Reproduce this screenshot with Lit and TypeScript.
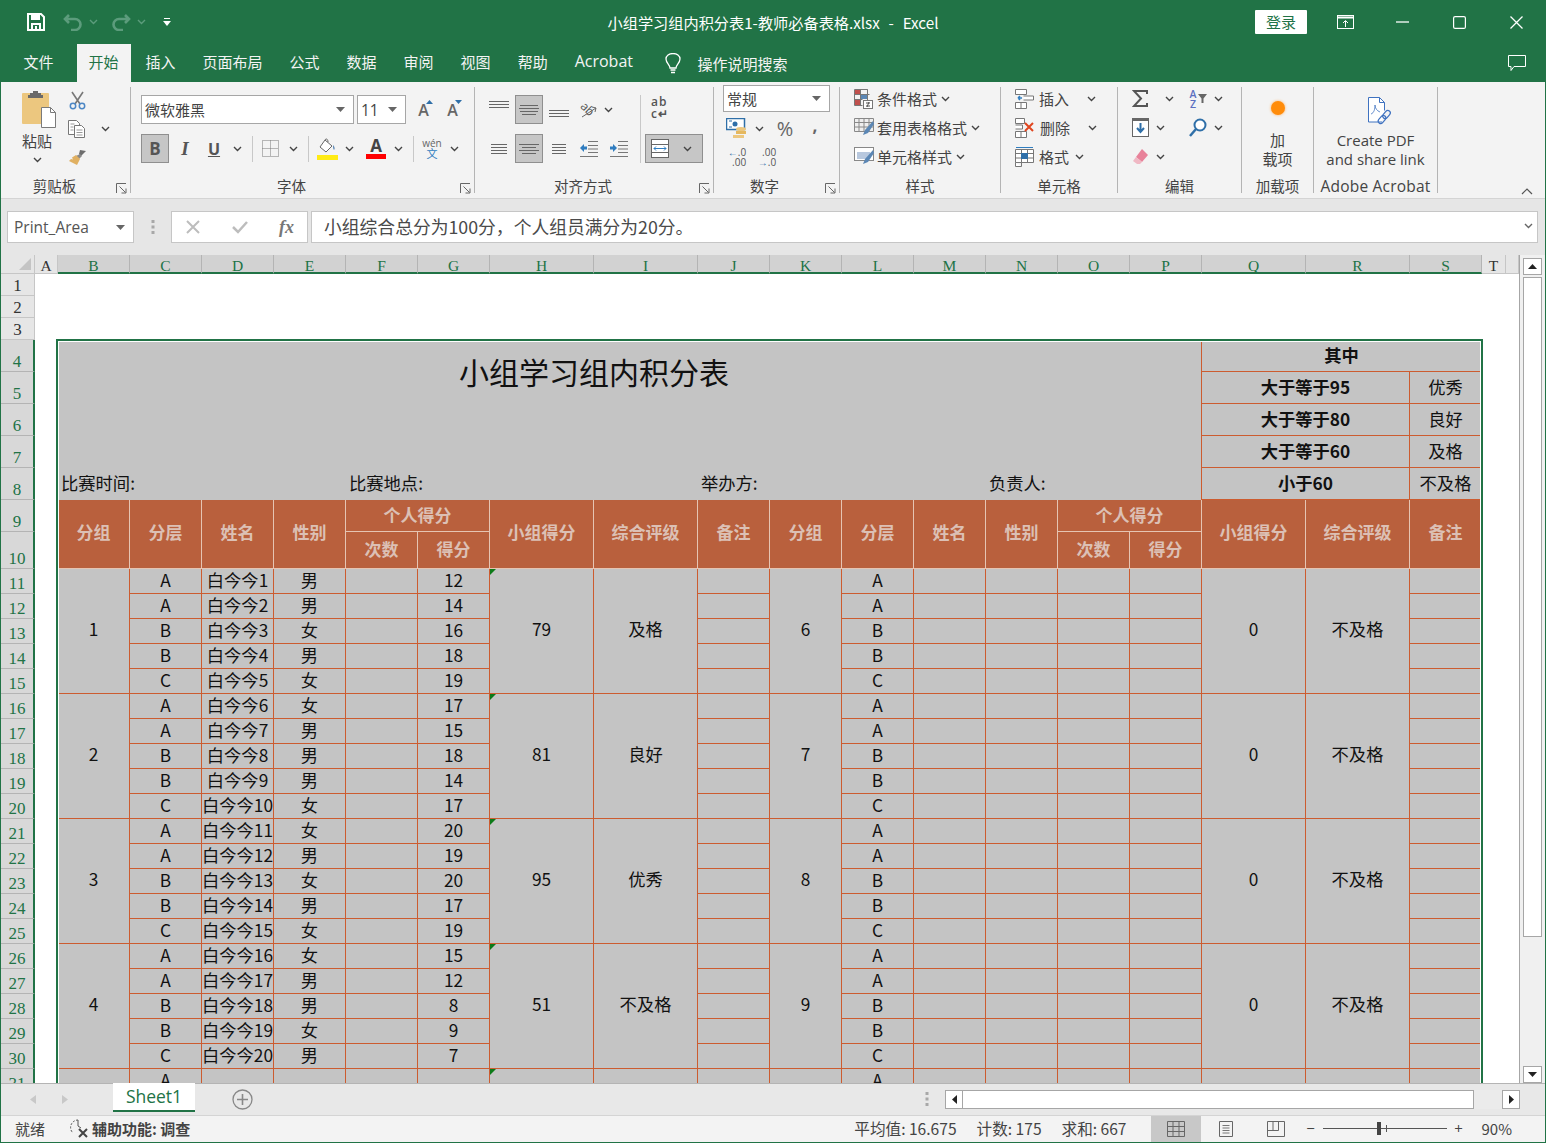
import { LitElement, html, svg, css, nothing } from 'lit';
import { customElement } from 'lit/decorators.js';

const chev = (c = '#444') => html`<svg class="chev" width="9" height="6" viewBox="0 0 9 6"><path d="M1 1l3.5 3.5L8 1" fill="none" stroke=${c} stroke-width="1.4"/></svg>`;
const drop = () => html`<svg width="9" height="5" viewBox="0 0 9 5"><path d="M0 0h9L4.5 5z" fill="#666"/></svg>`;

const launcher = () => html`<svg class="launcher" width="11" height="11" viewBox="0 0 11 11"><path d="M.5 10V.5H10M3.5 3.5l6 6M10 5.5V10H5.5" fill="none" stroke="#666"/></svg>`;

const lines = (rows: [number, number][], w = 20, h = 16) => html`<svg width=${w} height=${h} viewBox="0 0 ${w} ${h}">
  ${rows.map(([y, inset]) => svg`<path d="M${inset} ${y + 0.5}H${w - inset}" stroke="#666"/>`)}
</svg>`;

const iconSave = html`<svg width="18" height="18" viewBox="0 0 18 18"><path d="M1 1h13l3 3v13H1z" fill="none" stroke="#fff" stroke-width="2"/><rect x="4" y="2" width="9" height="5" fill="#fff"/><path d="M5 17v-6h8v6" fill="none" stroke="#fff" stroke-width="2"/><rect x="8" y="13" width="2" height="3" fill="#fff"/></svg>`;
const iconUndo = html`<svg width="20" height="18" viewBox="0 0 20 18"><path d="M6 2L2 6l4 4M2 6h10a5 5 0 010 11H8" fill="none" stroke="#5c9c7c" stroke-width="2.6"/></svg>`;
const iconRedo = html`<svg width="20" height="18" viewBox="0 0 20 18"><path d="M14 2l4 4-4 4M18 6H8a5 5 0 000 11h4" fill="none" stroke="#5c9c7c" stroke-width="2.6"/></svg>`;
const iconCustom = html`<svg width="8" height="9" viewBox="0 0 8 9"><path d="M1 .5h6" stroke="#fff"/><path d="M0 3h8L4 8z" fill="#fff"/></svg>`;

const iconPaste = html`<svg width="36" height="38" viewBox="0 0 36 38"><rect x="1" y="3" width="27" height="31" rx="1" fill="#ecc77f"/><path d="M9 5V3h3V1h5v2h3v2h2v3H7V5z" fill="#6a6a6a"/><path d="M20.5 17.5h9l5 5v15h-14z" fill="#fff" stroke="#7a7a7a"/><path d="M29.5 17.5v5h5" fill="none" stroke="#7a7a7a"/></svg>`;
const iconScissors = html`<svg width="17" height="19" viewBox="0 0 17 19"><path d="M3 1l8 12M14 1L6 13" stroke="#777" stroke-width="1.6" fill="none"/><circle cx="4" cy="15" r="2.7" fill="none" stroke="#4c87c5" stroke-width="1.5"/><circle cx="13" cy="15" r="2.7" fill="none" stroke="#4c87c5" stroke-width="1.5"/></svg>`;
const iconCopy = html`<svg width="18" height="18" viewBox="0 0 18 18"><path d="M.5.5h8l3 3v11H.5z" fill="#fff" stroke="#777"/><path d="M6.5 5.5h7l3 3v9h-10z" fill="#fff" stroke="#777"/><path d="M2.5 4h4M2.5 7h3M2.5 10h3M8.5 10h6M8.5 12.5h6M8.5 15h6" stroke="#999"/></svg>`;
const iconBrush = html`<svg width="19" height="17" viewBox="0 0 19 17"><path d="M12 1l6 1-5 5-2-2z" fill="#6d6d6d"/><path d="M12 5l2 2-3 3-3-3z" fill="#888"/><path d="M8 6l4 4-3 6-8-4 2-2 2 .5-1-2z" fill="#e0b062"/></svg>`;

const iconBorder = html`<svg width="17" height="17" viewBox="0 0 17 17"><path d="M.5.5h16v16H.5zM8.5.5v16M.5 8.5h16" fill="none" stroke="#777" stroke-dasharray="1 1"/></svg>`;
const iconFill = html`<svg width="21" height="22" viewBox="0 0 21 22"><path d="M8 2l7 6-6 6-6-5z" fill="#fff" stroke="#666"/><path d="M8 2c1-2 3-1 3 2" fill="none" stroke="#666"/><path d="M16 7c2 2 2 4 1 5-1-1-1-3-1-5z" fill="#5b87b5"/><rect y="17" width="21" height="5" fill="#ffeb14"/></svg>`;

const iconOrient = html`<svg width="20" height="20" viewBox="0 0 20 20"><text x="1" y="12" transform="rotate(45 7 9)" class="tiny-text">ab</text><path d="M3 17l14-9M13 7l4 1-1 4" fill="none" stroke="#666"/></svg>`;
const iconOutdent = html`<svg width="18" height="16" viewBox="0 0 18 16"><path d="M8 .5h10M8 4.5h10M8 8h10M8 11.5h10M0 15.5h18" stroke="#777"/><path d="M0 7l4-4v2.5h3v3H4V11z" fill="#2f7dc0"/></svg>`;
const iconIndent = html`<svg width="18" height="16" viewBox="0 0 18 16"><path d="M8 .5h10M8 4.5h10M8 8h10M8 11.5h10M0 15.5h18" stroke="#777"/><path d="M7 7L3 3v2.5H0v3h3V11z" fill="#2f7dc0"/></svg>`;
const iconMerge = html`<svg width="18" height="19" viewBox="0 0 18 19"><rect x=".5" y=".5" width="17" height="18" fill="#fff" stroke="#666"/><path d="M.5 5.5h17M.5 13.5h17" stroke="#666"/><path d="M3 9.5h12M5 7.5l-2 2 2 2M13 7.5l2 2-2 2" fill="none" stroke="#2f7dc0"/></svg>`;
const iconCur = html`<svg width="22" height="22" viewBox="0 0 22 22"><rect x=".5" y=".5" width="18" height="11" fill="#fff" stroke="#2f6fa8" stroke-width="1.5"/><circle cx="9" cy="6" r="2.5" fill="#2f6fa8"/><path d="M3 3h3M3 9h3" stroke="#2f6fa8"/><ellipse cx="15" cy="11" rx="5" ry="2" fill="#ecc77f"/><rect x="10" y="13" width="10" height="3" fill="#e5b85f"/><rect x="7" y="17" width="11" height="3" fill="#ecc77f"/></svg>`;

const iconCond = html`<svg width="20" height="20" viewBox="0 0 20 20"><path d="M.5.5h13v13M.5.5v16h8M.5 5.5h15M.5 10.5h8M6.5.5v16M13.5.5v4" fill="none" stroke="#777"/><rect x="1" y="1" width="5" height="4" fill="#c0504d"/><rect x="7" y="6" width="6" height="4" fill="#5b87b5"/><rect x="1" y="11" width="5" height="5" fill="#c0504d"/><rect x="9.5" y="11.5" width="9" height="8" fill="#fff" stroke="#777"/><path d="M12 14h4M12 17h4M15 13l-2 5" stroke="#555" fill="none"/></svg>`;
const iconTable = html`<svg width="20" height="19" viewBox="0 0 20 19"><path d="M.5.5h19v13H.5zM.5 4.5h19M.5 9h19M5 .5v13M10 .5v13M15 .5v13" fill="#eee" stroke="#888"/><path d="M19 3l-8 9-2 5 5-2 6-9z" fill="#5b87b5"/></svg>`;
const iconStyle = html`<svg width="20" height="19" viewBox="0 0 20 19"><rect x=".5" y=".5" width="19" height="13" fill="#fff" stroke="#888"/><rect x="3" y="5" width="13" height="7" fill="#b8c8de"/><path d="M19 3l-8 9-2 5 5-2 6-9z" fill="#5b87b5"/></svg>`;
const iconInsert = html`<svg width="19" height="20" viewBox="0 0 19 20"><path d="M.5.5h11v5H.5zM.5 13.5h11v6H.5zM6 13.5v6M8.5 7h10v4h-10" fill="#fff" stroke="#777"/><path d="M7 9H3M3 9l2-2M3 9l2 2" stroke="#2f7dc0" fill="none" stroke-width="1.5"/></svg>`;
const iconDelete = html`<svg width="20" height="20" viewBox="0 0 20 20"><path d="M.5.5h9v5H.5zM.5 13.5h11v6H.5zM6 13.5v6M.5 7h7v4h-7" fill="#fff" stroke="#777"/><path d="M10 5l8 8M18 5l-8 8" stroke="#e0451f" stroke-width="2"/></svg>`;
const iconFormat = html`<svg width="19" height="20" viewBox="0 0 19 20"><path d="M.5 2.5h18v13H.5zM.5 6.5h18M.5 11h18M6.5 2.5v17M12.5 2.5v13M.5 15.5v4h6" fill="#fff" stroke="#777"/><rect x="6" y="6" width="7" height="6" fill="#2f6fa8"/><path d="M1 .5h17" stroke="#2f7dc0"/></svg>`;
const iconSum = html`<svg width="17" height="17" viewBox="0 0 17 17"><path d="M15 4V1H2l7 7.5L2 16h13v-3" fill="none" stroke="#555" stroke-width="2"/></svg>`;
const iconFillDown = html`<svg width="17" height="19" viewBox="0 0 17 19"><rect x=".5" y=".5" width="16" height="18" fill="#fff" stroke="#666"/><rect x="1" y="1" width="15" height="2" fill="#666"/><path d="M8.5 5v9M5 10l3.5 4 3.5-4" fill="none" stroke="#2f6fa8" stroke-width="2"/></svg>`;
const iconFilter = html`<svg width="9" height="9" viewBox="0 0 9 9"><path d="M0 0h9L5.5 4.5V9h-2V4.500z" fill="#666"/></svg>`;
const iconFind = html`<svg width="18" height="19" viewBox="0 0 18 19"><circle cx="11" cy="7" r="5.5" fill="#fff" stroke="#2f6fa8" stroke-width="2"/><path d="M7 11l-6 7" stroke="#2f6fa8" stroke-width="2.5"/></svg>`;
const iconEraser = html`<svg width="17" height="17" viewBox="0 0 17 17"><path d="M10 1l6 6-6 7-6-5z" fill="#e8829a"/><path d="M4 9l6 5-2 2H5l-4-3z" fill="#f0b8c4"/></svg>`;
const iconPdf = html`<svg width="26" height="29" viewBox="0 0 26 29"><path d="M15 25H1.5V.5h11l5 5v8" fill="#fff" stroke="#3f72c0"/><path d="M12.5.5v5h5" fill="none" stroke="#3f72c0"/><path d="M4 17c3-1 4-5 4-9 0 3 2 6 5 7" fill="none" stroke="#3f72c0" stroke-width=".8"/><g fill="none" stroke="#3f72c0" stroke-width="1.2"><rect x="17" y="13" width="5" height="9" rx="2.5" transform="rotate(40 19.5 17.5)"/><rect x="12.5" y="18" width="5" height="9" rx="2.5" transform="rotate(40 15 22.5)"/></g></svg>`;
const iconAcc = html`<svg width="20" height="20" viewBox="0 0 20 20"><path d="M9 2a7.5 7.5 0 00-5 13" fill="none" stroke="#555" stroke-dasharray="2 1.5"/><path d="M9 2v6l3 2" fill="none" stroke="#555"/><path d="M10 11l8 8M18 11l-8 8" stroke="#444" stroke-width="2"/></svg>`;

const COLS = [34, 23, 72, 72, 72, 72, 72, 72, 104, 104, 72, 72, 72, 72, 72, 72, 72, 104, 104, 72, 24, 13];
const NAMES = ['', 'A', 'B', 'C', 'D', 'E', 'F', 'G', 'H', 'I', 'J', 'K', 'L', 'M', 'N', 'O', 'P', 'Q', 'R', 'S', 'T', ''];
const ROWS = [19, 22, 22, 22, 32, 32, 32, 32, 32, 32, 37, ...Array(25).fill(25)];
const c = (l: string) => NAMES.indexOf(l) + 1;

const LEVELS = ['A', 'A', 'B', 'B', 'C'];
const SEX = '男男女男女女男男男女女男女男女女男男女男'.split('');
const SCORES = [12, 14, 16, 18, 19, 17, 15, 18, 14, 17, 20, 19, 20, 17, 19, 15, 12, 8, 9, 7];
const GROUPS = [
  { no: 1, total: 79, rating: '及格', right: 6 },
  { no: 2, total: 81, rating: '良好', right: 7 },
  { no: 3, total: 95, rating: '优秀', right: 8 },
  { no: 4, total: 51, rating: '不及格', right: 9 },
  { no: null, total: null, rating: '', right: null },
];

const cell = (col: string, row: number, cs: number, rs: number, cls: string, text: unknown = '') => html`<div
  class="cell ${rs > 1 ? 'multi' : ''} ${cls}"
  style="grid-area:${row + 1}/${c(col)}/span ${rs}/span ${cs}"
>${text}</div>`;

@customElement('app-root')
export class AppRoot extends LitElement {
  static styles = css`
    :host {
      display: flex;
      flex-direction: column;
      height: 1143px;
      box-sizing: border-box;
      border: 1px solid #217346;
      border-top: 0;
      background: #f3f3f3;
      overflow: hidden;
      font-family: 'Noto Sans CJK SC', 'Liberation Sans', sans-serif;
      color: #444;
    }
    svg { display: block; flex: none; }
    .tiny-text { font: 12px 'Open Sans', sans-serif; fill: #555; }

    .title-bar {
      height: 44px; background: #217346; color: #fff; flex: none;
      display: grid; grid-template-columns: 1fr auto 1fr; align-items: center;
    }
    .qat { display: flex; align-items: center; padding-left: 26px; }
    .qat .undo { margin-left: 18px; }
    .qat .redo { margin-left: 13px; }
    .qat .chev { margin: 0 0 0 6px; }
    .qat .custom { margin-left: 17px; }
    .doc-title { font-size: 15.2px; word-spacing: 1px; white-space: pre; line-height: 43px; }
    .win { display: flex; justify-content: flex-end; align-items: center; }
    .login { width: 52px; height: 24px; background: #fff; color: #217346; font-size: 15px; line-height: 24px; text-align: center; border-radius: 1px; margin-right: 10px; }
    .win-btn { width: 57px; height: 44px; display: flex; align-items: center; justify-content: center; }

    .tabs { height: 38px; background: #217346; flex: none; display: flex; align-items: stretch; padding-left: 9px; color: #f4f4f4; font-size: 15px; }
    .tab { padding: 0 13.5px; line-height: 35px; }
    .tab.on { background: #f3f3f3; color: #217346; padding: 0 12px; margin: 0 1.5px 0 9.5px; }
    .tab.latin { font-family: 'Open Sans', sans-serif; font-size: 16px; }
    .bulb { display: flex; align-items: center; margin-left: 19px; gap: 16px; line-height: 35px; }
    .tabs .comment { margin-left: auto; align-self: center; margin-right: 19px; }

    .ribbon { height: 117px; flex: none; background: #f3f3f3; border-bottom: 1px solid #d4d4d4; box-sizing: border-box; display: flex; padding-top: 5px; position: relative; font-size: 15px; color: #444; }
    .group { height: 106px; box-sizing: border-box; border-right: 1px solid #b4b4b4; display: flex; flex-direction: column; position: relative; flex: none; }
    .group .body { flex: 1; min-height: 0; display: flex; }
    .group .label { height: 22px; box-sizing: border-box; padding-top: 5px; line-height: 20px; text-align: center; font-size: 14.5px; color: #444; white-space: nowrap; }
    .launcher { position: absolute; right: 3px; bottom: -1px; }
    .collapse { position: absolute; right: 12px; bottom: 3px; }
    .g-clip { width: 130px; } .g-font { width: 344px; } .g-align { width: 239px; } .g-num { width: 126px; }
    .g-style { width: 161px; } .g-cell { width: 117px; } .g-edit { width: 124px; } .g-add { width: 72px; } .g-adobe { width: 124px; }
    .g-clip .label { padding-right: 22px; }
    .g-font .label, .g-align .label { padding-right: 22px; }
    .g-num .label { padding-right: 24px; }

    .paste { width: 61px; padding-left: 20px; box-sizing: border-box; display: flex; flex-direction: column; align-items: flex-start; padding-top: 3px; }
    .paste span { line-height: 20px; margin-top: 3px; margin-left: 1px; font-size: 15px; white-space: nowrap; }
    .paste .chev { margin: 6px 0 0 12px; }
    .clip-tools { display: grid; grid-template-rows: 22px 36px 20px; grid-template-columns: 20px 16px; padding: 2px 0 0 5px; align-items: center; justify-items: center; column-gap: 10px; }
    .clip-tools .chev { grid-column: 2; grid-row: 2; }
    .clip-tools .a { grid-column: 1; grid-row: 1; }
    .clip-tools .b { grid-column: 1; grid-row: 2; }
    .clip-tools .d { grid-column: 1; grid-row: 3; }

    .stack { display: flex; flex-direction: column; padding: 8px 0 0 10px; gap: 10px; }
    .row1 { display: flex; height: 29px; align-items: center; }
    .select { height: 29px; box-sizing: border-box; border: 1px solid #a6a6a6; background: #fff; display: flex; align-items: center; padding: 0 8px 0 3px; justify-content: space-between; font-size: 15px; color: #444; }
    .sel-font { width: 213px; }
    .sel-size { width: 49px; margin-left: 3px; font-family: 'Open Sans', sans-serif; font-size: 15.5px; }
    .growth { width: 29px; height: 29px; display: flex; align-items: center; justify-content: center; position: relative; font: 600 16px 'Open Sans', sans-serif; color: #666; }
    .growth svg { position: absolute; top: 5px; right: 5px; }
    .growth.first { margin-left: 3px; }
    .font-row { display: grid; height: 29px; grid-template-columns: 28px 32px 26px 20px 11px 24px 22px 9px 28px 16px 38px 6px 25px 12px 32px; align-items: center; justify-items: center; }
    .font-row > * { display: flex; align-items: center; justify-content: center; }
    .pressed { background: #c6c6c6; border: 1px solid #8f8f8f; box-sizing: border-box; }
    .btn-b { width: 28px; height: 29px; font: 700 17px 'Open Sans', sans-serif; color: #555; }
    .btn-i { font: italic 700 19px 'Liberation Serif', serif; color: #555; }
    .btn-u { font: 700 16px 'Open Sans', sans-serif; color: #555; text-decoration: underline; }
    .vsep { width: 1px; height: 26px; background: #c8c8c8; }
    .colorA { flex-direction: column; width: 20px; font: 700 17px/15px 'Open Sans', sans-serif; color: #444; }
    .colorA i { display: block; width: 20px; height: 5px; background: #f00; margin-top: 1px; }
    .wen { flex-direction: column; font-family: 'Noto Sans CJK SC', sans-serif; }
    .wen b { font: 10px/9px 'Open Sans', sans-serif; color: #666; }
    .wen i { font: 11px/11px 'Noto Sans CJK SC', sans-serif; color: #2f7dc0; }

    .align { display: grid; grid-template-columns: 162px 1px 1fr; grid-template-rows: 29px 29px; row-gap: 10px; padding: 8px 0 0 3px; height: 68px; }
    .align-row { display: grid; grid-template-columns: repeat(5, 30px); align-items: center; justify-items: center; padding-left: 6px; }
    .align-row > * { display: flex; align-items: center; justify-content: center; }
    .align-row .on { width: 28px; height: 29px; }
    .align-row .top { margin-bottom: 10px; }
    .align-row .bottom { margin-top: 9px; }
    .align-row .near { justify-self: start; margin-left: 0; }
    .align .sep { grid-row: 1 / span 2; grid-column: 2; width: 1px; background: #c8c8c8; height: 68px; }
    .wrap { padding: 1px 0 0 10px; font: 600 12px/12px 'Open Sans', sans-serif; color: #555; }
    .wrap span { display: block; letter-spacing: 1px; }
    .merge { margin-left: 4px; width: 58px; height: 29px; display: flex; align-items: center; gap: 14px; padding-left: 5px; }
    .num { margin-top: -2px; padding-left: 9px; display: flex; flex-direction: column; }
    .sel-num { width: 107px; height: 28px; }
    .num-row { display: grid; grid-template-columns: 28px 16px 36px 24px; height: 29px; align-items: center; justify-items: center; margin-top: 2px; font: 20px 'Open Sans', sans-serif; color: #666; }
    .num-row .comma { font-weight: 700; font-size: 17px; margin-top: -6px; }
    .num-row2 { display: grid; grid-template-columns: 28px 32px; height: 29px; align-items: center; justify-items: center; }
    .dec { font: 10px/10px 'Open Sans', sans-serif; color: #555; text-align: right; display: flex; flex-direction: column; }
    .dec b { color: #2f6fa8; }

    .list { display: flex; flex-direction: column; padding-left: 14px; margin-top: -3px; }
    .list-item { display: flex; height: 29px; align-items: center; gap: 3px; white-space: nowrap; font-size: 15px; }
    .list-item .chev { margin-left: 1px; }
    .g-cell .list-item { gap: 5px; }
    .far { margin-left: 12px; }
    .edit { display: grid; grid-template-columns: 24px 34px 24px 16px; grid-auto-rows: 29px; margin-top: -3px; padding-left: 10px; align-items: center; justify-items: center; }
    .edit .sl { justify-self: start; margin-left: 4px; }
    .sort { font: 600 10.5px/10px 'Open Sans', sans-serif; color: #5b6fc0; display: flex; align-items: center; gap: 1px; }
    .sort b { font-weight: 600; display: block; width: 8px; text-align: center; }
    .big { flex-direction: column; width: 100%; display: flex; align-items: center; text-align: center; }
    .dot { width: 14px; height: 14px; border-radius: 50%; background: #ff8c0a; margin: 14px 0 15px; box-shadow: 0 0 3px #ffb060; }
    .big p { margin: 0; line-height: 19px; white-space: nowrap; font-size: 15px; }
    .big.acro svg { margin: 10px 0 0 8px; }
    .big.acro p { font: 15px/19px 'Open Sans', sans-serif; }
    .big.acro .stk { margin-top: 5px; }
    .group .label.acro { font-family: 'Open Sans', sans-serif; font-size: 15.5px; letter-spacing: .2px; }

    .fbar { height: 56px; flex: none; background: #e6e6e6; padding: 12px 7px 12px 6px; box-sizing: border-box; display: flex; }
    .fbar > div { background: #fff; border: 1px solid #c6c6c6; box-sizing: border-box; height: 32px; display: flex; align-items: center; }
    .namebox { width: 127px; padding: 0 8px 0 6px; justify-content: space-between; font: 15.5px 'Open Sans', sans-serif; color: #555; }
    .fbar .grip { width: 37px; background: none; border: 0; justify-content: center; }
    .fbar .fx { width: 137px; justify-content: space-between; color: #b4b4b4; padding: 0 13px 0 14px; }
    .fx i { font: italic 700 18px 'Liberation Serif', serif; color: #777; }
    .finput { flex: 1; margin-left: 3px; padding: 0 4px 3px 12px; justify-content: space-between; font-size: 17.8px; color: #4a4a4a; }

    .sheet-wrap { height: 828px; flex: none; display: flex; }
    .sheet { width: 1518px; height: 828px; overflow: hidden; display: grid; background: #fff; flex: none; align-content: start; border-right: 1px solid #a6a6a6; box-sizing: content-box; }
    .hd { background: #e6e6e6; border-right: 1px solid #c6c6c6; border-bottom: 1px solid #c6c6c6; box-sizing: border-box; font: 15.5px/21px 'Liberation Serif', serif; text-align: center; color: #333; overflow: hidden; }
    .hd.col-sel { background: #d2d2d2; color: #217346; border-bottom: 2px solid #217346; border-right-color: #b4b4b4; }
    .hd.corner { position: relative; }
    .hd.corner::after { content: ''; position: absolute; right: 3px; bottom: 3px; border-style: solid; border-width: 0 0 12px 12px; border-color: transparent transparent #c4c4c4 transparent; }
    .hd.row { display: flex; align-items: flex-end; justify-content: center; font-size: 17px; line-height: 18px; }
    .hd.row-sel { background: #d8d8d8; color: #217346; border-right: 2px solid #217346; border-bottom-color: #b4b4b4; }
    .cell { background: #c4c4c4; color: #111; font-size: 17.3px; line-height: 22px; display: flex; align-items: center; justify-content: center; box-sizing: border-box; border-right: 1px solid #cc5c30; border-bottom: 1px solid #cc5c30; white-space: nowrap; position: relative; padding-bottom: 2px; }
    .cell.multi { padding-bottom: 4px; }
    .cell.nb { border-bottom: 0; }
    .cell.title { font-size: 30px; line-height: 40px; align-items: flex-start; padding: 11px 0 0; border: 0; color: #111; }
    .meta { border: 0; justify-content: flex-start; padding-left: 3px; }
    .meta.end { border-right: 1px solid #cc5c30; }
    .strong { font-weight: 700; }
    .head { background: #b9603d; color: #dcc0b5; font-weight: 700; border-color: #e6c4b2; font-size: 17px; }
    .tri::before { content: ''; position: absolute; left: 0; top: 0; border-style: solid; border-width: 6px 6px 0 0; border-color: #0c7a18 transparent transparent transparent; }
    .selection { grid-area: 5 / 3 / 37 / 21; margin: -1px -1px 0 -2px; border: 2px solid #217346; box-shadow: inset 0 0 0 1px #fff; z-index: 2; pointer-events: none; }

    .vscroll { width: 25px; background: #f0f0f0; position: relative; display: flex; flex-direction: column; align-items: center; padding-top: 3px; box-sizing: border-box; }
    .sbtn { width: 19px; height: 17px; background: #fff; border: 1px solid #a6a6a6; box-sizing: border-box; display: flex; align-items: center; justify-content: center; flex: none; }
    .vthumb { width: 19px; height: 660px; margin-top: 2px; background: #fff; border: 1px solid #a6a6a6; box-sizing: border-box; }
    .vscroll .spacer { flex: 1; }

    .tabbar { height: 32px; flex: none; background: #e8e8e8; border-top: 1px solid #b4b4b4; box-sizing: border-box; display: flex; align-items: flex-start; position: relative; }
    .nav { width: 112px; display: flex; height: 30px; align-items: center; gap: 26px; padding-left: 29px; box-sizing: border-box; }
    .sheet-tab { width: 82px; height: 27px; background: #fff; border-bottom: 2px solid #217346; box-sizing: content-box; color: #217346; font: 17.5px/26px 'Open Sans', sans-serif; text-align: center; margin-top: -1px; }
    .add { margin: 5px 0 0 37px; }
    .hscroll { margin-left: auto; display: flex; align-items: center; height: 30px; margin-right: 25px; }
    .hgrip { margin-right: 16px; }
    .hthumb { width: 511px; height: 19px; background: #fff; border: 1px solid #a6a6a6; border-left: 0; box-sizing: border-box; }
    .hgap { width: 28px; height: 19px; background: #ebebeb; }
    .hbtn { width: 18px; height: 19px; }

    .status { height: 27px; flex: none; background: #f3f3f3; border-top: 1px solid #d4d4d4; box-sizing: border-box; display: flex; align-items: center; font-size: 15px; color: #444; padding: 0 0 2px 14px; white-space: nowrap; }
    .acc { display: flex; align-items: center; margin-left: 24px; gap: 3px; font-weight: 700; }
    .stats { margin-left: auto; display: flex; gap: 20px; font-size: 15.6px; }
    .views { display: flex; margin: 0 0 -2px 24px; align-self: stretch; }
    .view { width: 50px; display: flex; align-items: center; justify-content: center; }
    .view.on { background: #c8c8c8; }
    .zoom { display: flex; align-items: center; margin-left: 3px; }
    .track { width: 124px; height: 1px; background: #555; position: relative; margin: 0 5px 0 5px; }
    .track .thumb { position: absolute; left: 54px; top: -6px; width: 4px; height: 13px; background: #444; }
    .track .tick { position: absolute; left: 63px; top: -3px; width: 1px; height: 7px; background: #555; }
    .pm { width: 14px; text-align: center; font: 15px 'Open Sans', sans-serif; }
    .pct { margin: 0 33px 0 16px; font-size: 15px; }
  `;

  private renderRibbon() {
    const valign = lines([[0, 0], [3, 0], [6, 0]], 20, 8);
    const vm = lines([[0, 1], [3, 0], [6, 1], [9, 3]], 20, 10);
    const left = lines([[0, 0], [3, 0], [6, 0], [9, 0]], 16, 10);
    const ctr = lines([[0, 0], [3, 3], [6, 0], [9, 3]], 20, 10);
    const right = lines([[0, 0], [3, 0], [6, 0], [9, 0]], 14, 10);
    return html`<div class="ribbon">
      <div class="group g-clip">
        <div class="body">
          <div class="paste">${iconPaste}<span>粘贴</span>${chev()}</div>
          <div class="clip-tools">
            <div class="a">${iconScissors}</div>
            <div class="b">${iconCopy}</div>
            ${chev()}
            <div class="d">${iconBrush}</div>
          </div>
        </div>
        <div class="label">剪贴板</div>${launcher()}
      </div>

      <div class="group g-font">
        <div class="body">
          <div class="stack">
            <div class="row1">
              <div class="select sel-font"><span>微软雅黑</span>${drop()}</div>
              <div class="select sel-size"><span>11</span>${drop()}</div>
              <div class="growth first">A<svg width="7" height="4" viewBox="0 0 7 4"><path d="M0 4l3.5-4L7 4z" fill="#2f6fa8"/></svg></div>
              <div class="growth">A<svg width="7" height="4" viewBox="0 0 7 4"><path d="M0 0l3.5 4L7 0z" fill="#2f6fa8"/></svg></div>
            </div>
            <div class="font-row">
              <div class="pressed btn-b">B</div>
              <div class="btn-i">I</div>
              <div class="btn-u">U</div>
              <div>${chev()}</div>
              <div class="vsep"></div>
              <div>${iconBorder}</div>
              <div>${chev()}</div>
              <div class="vsep"></div>
              <div>${iconFill}</div>
              <div>${chev()}</div>
              <div class="colorA">A<i></i></div>
              <div>${chev()}</div>
              <div class="vsep"></div>
              <div class="wen"><b>wén</b><i>文</i></div>
              <div>${chev()}</div>
            </div>
          </div>
        </div>
        <div class="label">字体</div>${launcher()}
      </div>

      <div class="group g-align">
        <div class="body">
          <div class="align">
            <div class="align-row">
              <div class="top">${valign}</div>
              <div class="pressed on">${vm}</div>
              <div class="bottom">${valign}</div>
              <div>${iconOrient}</div>
              <div class="near">${chev()}</div>
            </div>
            <div class="sep"></div>
            <div class="wrap"><span>ab</span><span>c↵</span></div>
            <div class="align-row">
              <div>${left}</div>
              <div class="pressed on">${ctr}</div>
              <div>${right}</div>
              <div>${iconOutdent}</div>
              <div>${iconIndent}</div>
            </div>
            <div class="merge pressed">${iconMerge}${chev()}</div>
          </div>
        </div>
        <div class="label">对齐方式</div>${launcher()}
      </div>

      <div class="group g-num">
        <div class="body">
          <div class="num">
            <div class="select sel-num"><span>常规</span>${drop()}</div>
            <div class="num-row"><div>${iconCur}</div>${chev()}<div>%</div><div class="comma">,</div></div>
            <div class="num-row2">
              <div class="dec"><span><b>←</b>.0</span><span>.00</span></div>
              <div class="dec"><span>.00</span><span><b>→</b>.0</span></div>
            </div>
          </div>
        </div>
        <div class="label">数字</div>${launcher()}
      </div>

      <div class="group g-style">
        <div class="body">
          <div class="list">
            <div class="list-item">${iconCond}<span>条件格式</span>${chev()}</div>
            <div class="list-item">${iconTable}<span>套用表格格式</span>${chev()}</div>
            <div class="list-item">${iconStyle}<span>单元格样式</span>${chev()}</div>
          </div>
        </div>
        <div class="label">样式</div>
      </div>

      <div class="group g-cell">
        <div class="body">
          <div class="list">
            <div class="list-item">${iconInsert}<span>插入</span><div class="far">${chev()}</div></div>
            <div class="list-item">${iconDelete}<span>删除</span><div class="far">${chev()}</div></div>
            <div class="list-item">${iconFormat}<span>格式</span>${chev()}</div>
          </div>
        </div>
        <div class="label">单元格</div>
      </div>

      <div class="group g-edit">
        <div class="body">
          <div class="edit">
            ${iconSum}${chev()}
            <div class="sort"><div><b>A</b><b>Z</b></div>${iconFilter}</div>${chev()}
            ${iconFillDown}<div class="sl">${chev()}</div>
            ${iconFind}${chev()}
            ${iconEraser}<div class="sl">${chev()}</div>
          </div>
        </div>
        <div class="label">编辑</div>
      </div>

      <div class="group g-add">
        <div class="body">
          <div class="big"><div class="dot"></div><p>加</p><p>载项</p></div>
        </div>
        <div class="label">加载项</div>
      </div>

      <div class="group g-adobe">
        <div class="body">
          <div class="big acro">${iconPdf}<div class="stk"><p>Create PDF</p><p>and share link</p></div></div>
        </div>
        <div class="label acro">Adobe Acrobat</div>
      </div>

      <svg class="collapse" width="12" height="7" viewBox="0 0 12 7"><path d="M1 6l5-5 5 5" fill="none" stroke="#555" stroke-width="1.2"/></svg>
    </div>`;
  }

  private renderHeaders() {
    const out = [];
    out.push(html`<div class="hd corner" style="grid-area:1/1"></div>`);
    NAMES.slice(1).forEach((n, i) => {
      const sel = i >= 1 && i <= 18;
      out.push(html`<div class="hd ${sel ? 'col-sel' : ''}" style="grid-area:1/${i + 2}">${n}</div>`);
    });
    for (let r = 1; r <= 31; r++) {
      const sel = r >= 4;
      out.push(html`<div class="hd row ${sel ? 'row-sel' : ''}" style="grid-area:${r + 1}/1">${r}</div>`);
    }
    return out;
  }

  private renderTop() {
    const right: [number, string, string][] = [
      [5, '大于等于95', '优秀'],
      [6, '大于等于80', '良好'],
      [7, '大于等于60', '及格'],
      [8, '小于60', '不及格'],
    ];
    return html`
      ${cell('B', 4, 14, 4, 'title', '小组学习组内积分表')}
      ${cell('P', 4, 1, 4, 'nb')}
      ${cell('B', 8, 4, 1, 'meta', '比赛时间:')}
      ${cell('F', 8, 4, 1, 'meta', '比赛地点:')}
      ${cell('J', 8, 4, 1, 'meta', '举办方:')}
      ${cell('N', 8, 3, 1, 'meta end', '负责人:')}
      ${cell('Q', 4, 3, 1, 'strong', '其中')}
      ${right.map(([r, a, b]) => html`${cell('Q', r, 2, 1, 'strong', a)}${cell('S', r, 1, 1, '', b)}`)}
    `;
  }

  private renderHead() {
    const block = (start: string[], span: string[], after: string[]) => {
      const tall = (l: string, t: string) => cell(l, 9, 1, 2, 'head', t);
      return html`
        ${start.map((l, i) => tall(l, ['分组', '分层', '姓名', '性别'][i]))}
        ${cell(span[0], 9, 2, 1, 'head', '个人得分')}
        ${cell(span[0], 10, 1, 1, 'head', '次数')}
        ${cell(span[1], 10, 1, 1, 'head', '得分')}
        ${after.map((l, i) => tall(l, ['小组得分', '综合评级', '备注'][i]))}
      `;
    };
    return html`
      ${block(['B', 'C', 'D', 'E'], ['F', 'G'], ['H', 'I', 'J'])}
      ${block(['K', 'L', 'M', 'N'], ['O', 'P'], ['Q', 'R', 'S'])}
    `;
  }

  private renderBody() {
    return GROUPS.map((g, gi) => {
      const base = 11 + gi * 5;
      const filled = g.no !== null;
      // the last group only peeks in by one row, the sheet is cut off below it
      const levels = filled ? LEVELS : LEVELS.slice(0, 1);
      return html`
        ${cell('B', base, 1, 5, '', g.no ?? nothing)}
        ${cell('H', base, 1, 5, 'tri', g.total ?? nothing)}
        ${cell('I', base, 1, 5, '', g.rating)}
        ${cell('K', base, 1, 5, '', g.right ?? nothing)}
        ${cell('Q', base, 1, 5, '', filled ? 0 : nothing)}
        ${cell('R', base, 1, 5, '', filled ? '不及格' : nothing)}
        ${levels.map((lv, i) => {
          const r = base + i;
          const k = gi * 5 + i;
          return html`
            ${cell('C', r, 1, 1, '', lv)}
            ${cell('D', r, 1, 1, '', filled ? `白今今${k + 1}` : '')}
            ${cell('E', r, 1, 1, '', filled ? SEX[k] : '')}
            ${cell('F', r, 1, 1, '')}
            ${cell('G', r, 1, 1, '', filled ? SCORES[k] : '')}
            ${cell('J', r, 1, 1, '')}
            ${cell('L', r, 1, 1, '', lv)}
            ${cell('M', r, 1, 1, '')}
            ${cell('N', r, 1, 1, '')}
            ${cell('O', r, 1, 1, '')}
            ${cell('P', r, 1, 1, '')}
            ${cell('S', r, 1, 1, '')}
          `;
        })}
      `;
    });
  }

  render() {
    return html`
      <div class="title-bar">
        <div class="qat">
          ${iconSave}
          <div class="undo">${iconUndo}</div>${chev('#5c9c7c')}
          <div class="redo">${iconRedo}</div>${chev('#5c9c7c')}
          <div class="custom">${iconCustom}</div>
        </div>
        <div class="doc-title">小组学习组内积分表1-教师必备表格.xlsx  -  Excel</div>
        <div class="win">
          <div class="login">登录</div>
          <div class="win-btn"><svg width="17" height="14" viewBox="0 0 17 14"><rect x=".5" y=".5" width="16" height="13" fill="none" stroke="#fff"/><path d="M.5 2.5h16" stroke="#fff" stroke-width="2"/><path d="M8.5 12V6M6 8l2.5-2.5L11 8" fill="none" stroke="#fff"/></svg></div>
          <div class="win-btn"><svg width="13" height="2" viewBox="0 0 13 2"><path d="M0 1h13" stroke="#fff" stroke-width="1.3"/></svg></div>
          <div class="win-btn"><svg width="13" height="13" viewBox="0 0 13 13"><rect x=".6" y=".6" width="11.8" height="11.8" rx="1.5" fill="none" stroke="#fff" stroke-width="1.2"/></svg></div>
          <div class="win-btn"><svg width="13" height="13" viewBox="0 0 13 13"><path d="M.5.5l12 12M12.5.5l-12 12" stroke="#fff" stroke-width="1.3"/></svg></div>
        </div>
      </div>

      <div class="tabs">
        <div class="tab">文件</div>
        <div class="tab on">开始</div>
        <div class="tab">插入</div>
        <div class="tab">页面布局</div>
        <div class="tab">公式</div>
        <div class="tab">数据</div>
        <div class="tab">审阅</div>
        <div class="tab">视图</div>
        <div class="tab">帮助</div>
        <div class="tab latin">Acrobat</div>
        <div class="bulb">
          <svg width="16" height="21" viewBox="0 0 16 21"><path d="M5 15c0-3-4-5-4-9a7 5.5 0 0114 0c0 4-4 6-4 9z" fill="none" stroke="#fff" stroke-width="1.3"/><path d="M5.5 17h5M6 19.5h4" stroke="#fff" stroke-width="1.3"/></svg>
          <span>操作说明搜索</span>
        </div>
        <svg class="comment" width="18" height="17" viewBox="0 0 18 17"><path d="M.5.5h17v11H6l-3 4v-4H.5z" fill="none" stroke="#fff"/></svg>
      </div>

      ${this.renderRibbon()}

      <div class="fbar">
        <div class="namebox"><span>Print_Area</span>${drop()}</div>
        <div class="grip"><svg width="4" height="14" viewBox="0 0 4 14"><path d="M2 0v3M2 5.5v3M2 11v3" stroke="#a8a8a8" stroke-width="3"/></svg></div>
        <div class="fx">
          <svg width="14" height="14" viewBox="0 0 14 14"><path d="M1 1l12 12M13 1L1 13" stroke="#bdbdbd" stroke-width="2"/></svg>
          <svg width="16" height="14" viewBox="0 0 16 14"><path d="M1 7l5 5 9-10" fill="none" stroke="#bdbdbd" stroke-width="2.5"/></svg>
          <i>fx</i>
        </div>
        <div class="finput"><span>小组综合总分为100分，个人组员满分为20分。</span>${chev('#666')}</div>
      </div>

      <div class="sheet-wrap">
        <div
          class="sheet"
          style="grid-template-columns:${COLS.map((w) => `${w}px`).join(' ')};grid-template-rows:${ROWS.map((h) => `${h}px`).join(' ')}"
        >
          ${this.renderHeaders()}
          ${this.renderTop()}
          ${this.renderHead()}
          ${this.renderBody()}
          <div class="selection"></div>
        </div>
        <div class="vscroll">
          <div class="sbtn"><svg width="9" height="5" viewBox="0 0 9 5"><path d="M0 5h9L4.5 0z" fill="#222"/></svg></div>
          <div class="vthumb"></div>
          <div class="spacer"></div>
          <div class="sbtn"><svg width="9" height="5" viewBox="0 0 9 5"><path d="M0 0h9L4.5 5z" fill="#222"/></svg></div>
        </div>
      </div>

      <div class="tabbar">
        <div class="nav">
          <svg width="6" height="9" viewBox="0 0 6 9"><path d="M6 0v9L0 4.5z" fill="#c8c8c8"/></svg>
          <svg width="6" height="9" viewBox="0 0 6 9"><path d="M0 0v9l6-4.5z" fill="#c8c8c8"/></svg>
        </div>
        <div class="sheet-tab">Sheet1</div>
        <svg class="add" width="21" height="21" viewBox="0 0 21 21"><circle cx="10.5" cy="10.5" r="9.5" fill="none" stroke="#888" stroke-width="1.3"/><path d="M10.5 5v11M5 10.5h11" stroke="#888" stroke-width="1.6"/></svg>
        <div class="hscroll">
          <svg class="hgrip" width="4" height="14" viewBox="0 0 4 14"><path d="M2 0v3M2 5.5v3M2 11v3" stroke="#a8a8a8" stroke-width="3"/></svg>
          <div class="sbtn hbtn"><svg width="5" height="9" viewBox="0 0 5 9"><path d="M5 0v9L0 4.5z" fill="#222"/></svg></div>
          <div class="hthumb"></div>
          <div class="hgap"></div>
          <div class="sbtn hbtn"><svg width="5" height="9" viewBox="0 0 5 9"><path d="M0 0v9l5-4.5z" fill="#222"/></svg></div>
        </div>
      </div>

      <div class="status">
        <span>就绪</span>
        <div class="acc">${iconAcc}<span>辅助功能: 调查</span></div>
        <div class="stats"><span>平均值: 16.675</span><span>计数: 175</span><span>求和: 667</span></div>
        <div class="views">
          <div class="view on"><svg width="18" height="16" viewBox="0 0 18 16"><path d="M.5.5h17v15H.5zM6 .5v15M12 .5v15M.5 5.5h17M.5 10.5h17" fill="none" stroke="#666"/></svg></div>
          <div class="view"><svg width="14" height="16" viewBox="0 0 14 16"><path d="M.5.5h13v15H.5z" fill="none" stroke="#666"/><path d="M3.5 4.5h7M3.5 7h7M3.5 9.5h7M3.5 12h7" stroke="#777"/></svg></div>
          <div class="view"><svg width="18" height="16" viewBox="0 0 18 16"><path d="M.5.5h17v15H.5zM.5 9.5h11v-9M6 .5v9" fill="none" stroke="#666"/></svg></div>
        </div>
        <div class="zoom">
          <span class="pm">−</span>
          <div class="track"><div class="thumb"></div><div class="tick"></div></div>
          <span class="pm">+</span>
        </div>
        <span class="pct">90%</span>
      </div>
    `;
  }
}
